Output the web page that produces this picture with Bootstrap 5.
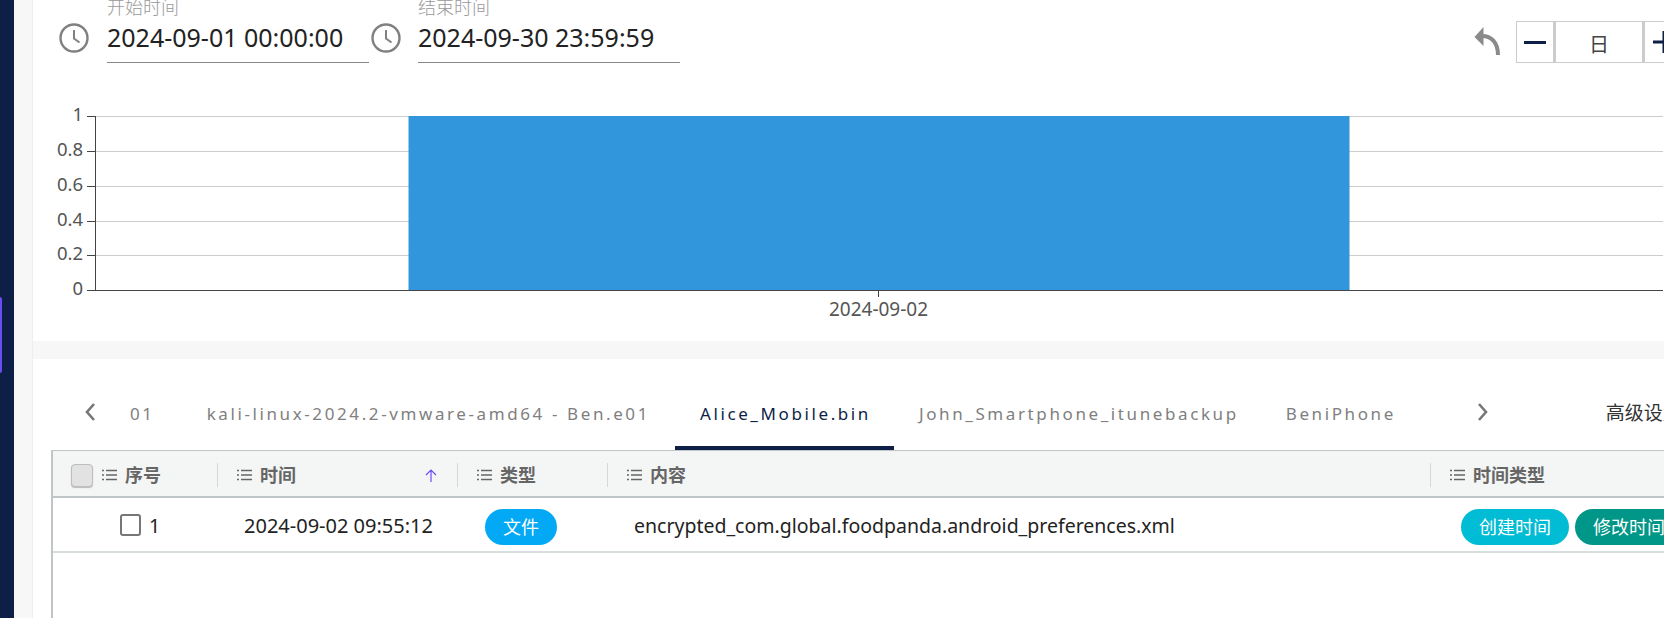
<!DOCTYPE html>
<html lang="zh-CN">
<head>
    <meta charset="UTF-8">
    <meta name="viewport" content="width=device-width, initial-scale=1.0">
    <title>时间线</title>
    <link href="https://cdn.jsdelivr.net/npm/bootstrap@5.3.0/dist/css/bootstrap.min.css" rel="stylesheet">
    <style>
        html, body { height: 100%; }
        body { overflow: hidden; background: #fff; font-family: "Noto Sans", "Noto Sans CJK SC", sans-serif; color: #222; }
        .side-rail { width: 14px; background: #0e1f47; flex: none; position: relative; }
        .side-mark { position: absolute; left: 0; top: 297px; width: 2px; height: 76px; background: #6a4cf0; border-radius: 0 3px 3px 0; }
        .side-gutter { width: 19px; background: #f7f7f7; border-right: 1px solid #eee; flex: none; }
        .page-main { width: 1700px; flex: none; height: 100%; }

        .tool-bar { height: 90px; padding: 0 50px 0 26px; }
        .clock-ico { width: 30px; height: 30px; margin-top: 23px; flex: none; }
        .time-field { width: 262px; margin-left: 18px; margin-right: 2px; margin-top: -3px; height: 66px; border-bottom: 1px solid #888; }
        .time-field + .clock-ico + .time-field { margin-left: 17px; }
        .time-label { font-size: 18px; line-height: 20px; color: #999; font-weight: 300; }
        .time-value { font-size: 25px; line-height: 36px; margin-top: 2px; color: #222; white-space: nowrap; }
        .undo-ico { width: 27px; height: 29px; margin: 27px 15px 0 0; }
        .step-box { height: 42px; margin-top: 21px; border: 1px solid #ccc; }
        .step-btn { width: 36px; border: 0; background: #fff; color: #0e1f47; padding: 0; }
        .step-btn:last-child { width: 37px; }
        .step-day { width: 92px; border-left: 3px solid #ccc; border-right: 3px solid #ccc; font-size: 20px; color: #444; padding-top: 8px; }

        .chart-wrap { height: 251px; }
        .chart-wrap svg { display: block; }
        .chart-wrap text { font-family: "Noto Sans", sans-serif; font-size: 18.5px; fill: #555; }
        .chart-wrap text.tick-x { font-size: 19px; }

        .band-gap { height: 18px; background: #f7f7f7; }

        .tab-row { height: 91px; padding-left: 27px; }
        .tab-arrow { width: 45px; height: 60px; }
        .tab-arrow-next { width: 68px; padding-left: 56px; }
        .tab-row .nav-link { padding: 0 25px; height: 60px; line-height: 47px; font-size: 17px; letter-spacing: 2.6px; color: #808080; border-bottom: 4px solid transparent; border-radius: 0; white-space: nowrap; }
        .tab-row .nav-item:nth-child(1) .nav-link { padding-right: 27px; }
        .tab-row .nav-item:nth-child(3) .nav-link { padding-right: 23px; }
        .tab-row .nav-item:nth-child(4) .nav-link { padding-right: 22px; }
        .tab-row .nav-link.active { color: #0e1f47; border-bottom-color: #0e1f47; }
        .tab-more { font-size: 19px; color: #333; white-space: nowrap; margin-left: 117px; padding-top: 9px; }

        .grid-box { margin-left: 18px; border-left: 2px solid #c0c5c8; border-top: 1px solid #c0c5c8; }
        .log-table { table-layout: fixed; width: 1682px; margin: 0; }
        .log-table th { background: #f4f6f6; height: 46px; padding: 3px 0 0; vertical-align: middle; border-bottom: 2px solid #c0c5c8; color: #666; font-size: 18px; font-weight: 700; }
        .log-table td { height: 55px; padding: 3px 0 0; vertical-align: middle; border-bottom: 2px solid #d8dde0; font-size: 19.5px; color: #222; white-space: nowrap; }
        .log-table td.time-cell { font-size: 20px; padding-left: 27px; }
        .log-table td.text-cell { padding-left: 27px; }
        .log-table td.pill-cell { padding-top: 5px; }
        .head-cell { height: 24px; border-left: 1px solid #d5d8d9; padding-left: 19px; gap: 8px; }
        .head-first { height: 24px; padding-left: 18px; gap: 8px; }
        .head-check { width: 22px; height: 23px; margin-right: 1px; background: #e2e2e2; border: 1px solid #bdbdbd; border-radius: 4px; box-shadow: 0 1px 1px #bbb; }
        .row-check { width: 21px; height: 22px; border: 2px solid #777; border-radius: 3px; margin: 0 8px 2px 67px; }
        .list-ico { width: 15px; height: 12px; flex: none; }
        .sort-ico { width: 12px; height: 13px; margin-left: auto; margin-right: 20px; }
        .tag-pill { display: inline-block; height: 36px; line-height: 36px; border-radius: 18px; color: #fff; font-size: 18px; text-align: center; white-space: nowrap; }
        .tag-file { width: 72px; background: #03a9f4; margin-left: 28px; }
        .tag-create { width: 108px; background: #00bcd4; margin-left: 31px; }
        .tag-modify { width: 108px; background: #009688; margin-left: 6px; }
    </style>
</head>
<body class="d-flex">
    <div class="side-rail"><div class="side-mark"></div></div>
    <div class="side-gutter"></div>

    <main class="page-main d-flex flex-column">
        <div class="tool-bar d-flex align-items-start">
            <svg class="clock-ico" viewBox="0 0 30 30"><circle cx="15" cy="15" r="13.5" fill="none" stroke="#808080" stroke-width="2.4"/><path d="M15 7v8.5l5.5 4" fill="none" stroke="#808080" stroke-width="2"/></svg>
            <div class="time-field">
                <div class="time-label">开始时间</div>
                <div class="time-value">2024-09-01 00:00:00</div>
            </div>
            <svg class="clock-ico" viewBox="0 0 30 30"><circle cx="15" cy="15" r="13.5" fill="none" stroke="#808080" stroke-width="2.4"/><path d="M15 7v8.5l5.5 4" fill="none" stroke="#808080" stroke-width="2"/></svg>
            <div class="time-field">
                <div class="time-label">结束时间</div>
                <div class="time-value">2024-09-30 23:59:59</div>
            </div>

            <svg class="undo-ico ms-auto" viewBox="0 0 27 29"><path d="M.5 10 9.5 0v19z" fill="#8a8a8a"/><path d="M8 9c9 0 16 6 16 19" fill="none" stroke="#8a8a8a" stroke-width="4"/></svg>
            <div class="step-box d-flex">
                <button class="step-btn d-flex align-items-center justify-content-center" type="button"><svg width="22" height="3"><rect width="22" height="3" fill="#0e1f47"/></svg></button>
                <div class="step-day text-center">日</div>
                <button class="step-btn d-flex align-items-center justify-content-center" type="button"><svg width="22" height="22"><rect y="9.5" width="22" height="3" fill="#0e1f47"/><rect x="9.5" width="3" height="22" fill="#0e1f47"/></svg></button>
            </div>
        </div>

        <div class="chart-wrap">
            <svg width="1631" height="251" viewBox="0 0 1631 251">
                <!-- chart origin: x 62 is the y axis, 200 is zero, 26 is 1 -->
                <g stroke="#ccc" stroke-width="1">
                    <path d="M62 26.5H1630M62 61.5H1630M62 96.5H1630M62 131.5H1630M62 165.5H1630"/>
                </g>
                <rect x="375.5" y="26" width="941" height="174" fill="#3296dc"/>
                <g stroke="#444" stroke-width="1">
                    <path d="M62.5 26V200.5M54 200.5H1630M54 26.5H62M54 61.5H62M54 96.5H62M54 131.5H62M54 165.5H62M845.5 200v7"/>
                </g>
                <g text-anchor="end">
                    <text x="50" y="31">1</text>
                    <text x="50" y="66">0.8</text>
                    <text x="50" y="101">0.6</text>
                    <text x="50" y="136">0.4</text>
                    <text x="50" y="170">0.2</text>
                    <text x="50" y="205">0</text>
                </g>
                <text class="tick-x" x="845.5" y="226" text-anchor="middle">2024-09-02</text>
            </svg>
        </div>

        <div class="band-gap"></div>

        <div class="tab-row d-flex align-items-end">
            <div class="d-flex align-items-start w-100">
                <div class="tab-arrow d-flex align-items-center ps-4 pb-3"><svg width="12" height="20" viewBox="0 0 12 20"><path d="M10 2 3 10l7 8" fill="none" stroke="#777" stroke-width="2.6"/></svg></div>
                <ul class="nav flex-nowrap">
                    <li class="nav-item"><a class="nav-link" href="#">01</a></li>
                    <li class="nav-item"><a class="nav-link" href="#">kali-linux-2024.2-vmware-amd64 - Ben.e01</a></li>
                    <li class="nav-item"><a class="nav-link active" href="#">Alice_Mobile.bin</a></li>
                    <li class="nav-item"><a class="nav-link" href="#">John_Smartphone_itunebackup</a></li>
                    <li class="nav-item"><a class="nav-link" href="#">BeniPhone</a></li>
                </ul>
                <div class="tab-arrow tab-arrow-next d-flex align-items-center pb-3"><svg width="12" height="20" viewBox="0 0 12 20"><path d="M2 2l7 8-7 8" fill="none" stroke="#777" stroke-width="2.6"/></svg></div>
                <div class="tab-more">高级设置</div>
            </div>
        </div>

        <div class="grid-box flex-grow-1">
            <table class="table log-table">
                <colgroup><col style="width:164px"><col style="width:240px"><col style="width:150px"><col style="width:823px"><col></colgroup>
                <thead>
                    <tr>
                        <th><div class="head-first d-flex align-items-center"><span class="head-check"></span><svg class="list-ico" viewBox="0 0 15 12"><path d="M4 1.5h11M4 6h11M4 10.5h11M0 1.5h2M0 6h2M0 10.5h2" stroke="#666" stroke-width="1.5"/></svg>序号</div></th>
                        <th><div class="head-cell d-flex align-items-center"><svg class="list-ico" viewBox="0 0 15 12"><path d="M4 1.5h11M4 6h11M4 10.5h11M0 1.5h2M0 6h2M0 10.5h2" stroke="#666" stroke-width="1.5"/></svg>时间<svg class="sort-ico" viewBox="0 0 12 13"><path d="M6 13V1M1 6l5-5 5 5" fill="none" stroke="#6f4cf5" stroke-width="1.2"/></svg></div></th>
                        <th><div class="head-cell d-flex align-items-center"><svg class="list-ico" viewBox="0 0 15 12"><path d="M4 1.5h11M4 6h11M4 10.5h11M0 1.5h2M0 6h2M0 10.5h2" stroke="#666" stroke-width="1.5"/></svg>类型</div></th>
                        <th><div class="head-cell d-flex align-items-center"><svg class="list-ico" viewBox="0 0 15 12"><path d="M4 1.5h11M4 6h11M4 10.5h11M0 1.5h2M0 6h2M0 10.5h2" stroke="#666" stroke-width="1.5"/></svg>内容</div></th>
                        <th><div class="head-cell d-flex align-items-center"><svg class="list-ico" viewBox="0 0 15 12"><path d="M4 1.5h11M4 6h11M4 10.5h11M0 1.5h2M0 6h2M0 10.5h2" stroke="#666" stroke-width="1.5"/></svg>时间类型</div></th>
                    </tr>
                </thead>
                <tbody>
                    <tr>
                        <td><div class="d-flex align-items-center"><span class="row-check"></span>1</div></td>
                        <td class="time-cell">2024-09-02 09:55:12</td>
                        <td class="pill-cell"><span class="tag-pill tag-file">文件</span></td>
                        <td class="text-cell">encrypted_com.global.foodpanda.android_preferences.xml</td>
                        <td class="pill-cell"><span class="tag-pill tag-create">创建时间</span><span class="tag-pill tag-modify">修改时间</span></td>
                    </tr>
                </tbody>
            </table>
        </div>
    </main>

    <script src="https://cdn.jsdelivr.net/npm/bootstrap@5.3.0/dist/js/bootstrap.bundle.min.js"></script>
</body>
</html>
